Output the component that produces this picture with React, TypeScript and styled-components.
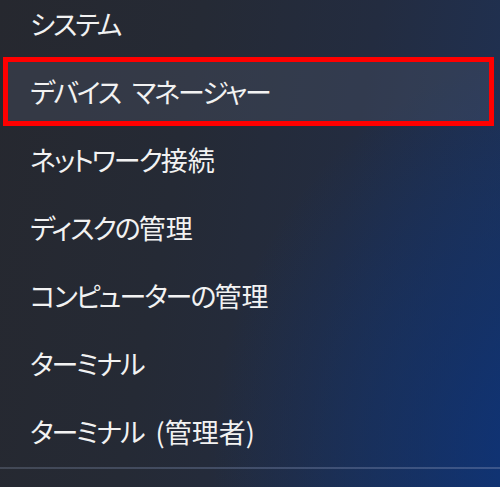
import React from "react";
import styled, { createGlobalStyle } from "styled-components";

const Global = createGlobalStyle`
  html, body {
    margin: 0;
    padding: 0;
    width: 500px;
    height: 487px;
    overflow: hidden;
  }
  body {
    font-family: "Noto Sans CJK JP", "Noto Sans", sans-serif;
  }
`;

const Screen = styled.div`
  width: 500px;
  height: 487px;
  overflow: hidden;
  display: flex;
  flex-direction: column;
  background:
    radial-gradient(ellipse 380px 420px at 118% 95%, rgba(10, 52, 128, 0.95) 0%, rgba(14, 50, 115, 0.6) 45%, rgba(20, 45, 95, 0) 100%),
    linear-gradient(100deg, #26282f 0%, #252a35 35%, #232c40 65%, #1e3258 100%);
`;

const Menu = styled.ul`
  list-style: none;
  margin: -11px 0 0 0;
  padding: 0;
  display: flex;
  flex-direction: column;
`;

const Item = styled.li<{ $active?: boolean }>`
  box-sizing: border-box;
  display: flex;
  align-items: center;
  white-space: pre;
  height: ${(p) => (p.$active ? "69px" : "68px")};
  margin: ${(p) => (p.$active ? "0 6px -1px 3px" : "0")};
  padding-left: ${(p) => (p.$active ? "22px" : "30px")};
  border: ${(p) => (p.$active ? "5px solid #ff0000" : "none")};
  background: ${(p) => (p.$active ? "rgba(80, 88, 108, 0.35)" : "transparent")};
  color: #f2f2f2;
  font-size: 27px;
  font-feature-settings: "palt" 1;
  line-height: 1;
`;

const Kana = styled.span`
  letter-spacing: -2px;
`;

const Kanji = styled.span`
  letter-spacing: 0;
`;

const Space = styled.span`
  display: inline-block;
  width: 12px;
`;

const Separator = styled.div`
  height: 2px;
  margin-top: 2px;
  background: linear-gradient(90deg, rgba(90, 98, 115, 0.55), rgba(95, 115, 160, 0.55));
`;

const items = [
  "システム",
  "デバイス マネージャー",
  "ネットワーク接続",
  "ディスクの管理",
  "コンピューターの管理",
  "ターミナル",
  "ターミナル (管理者)",
];

function renderRuns(text: string) {
  const runs = text.match(/[\u3040-\u30ff]+|\s+|[^\u3040-\u30ff\s]+/g) || [];
  return runs.map((r, i) => {
    if (/^\s+$/.test(r)) return <Space key={i} />;
    if (/[\u3040-\u30ff]/.test(r)) return <Kana key={i}>{r}</Kana>;
    return <Kanji key={i}>{r}</Kanji>;
  });
}

export default function App() {
  return (
    <Screen>
      <Global />
      <Menu>
        {items.map((t, i) => (
          <Item key={t} $active={i === 1}>
            {renderRuns(t)}
          </Item>
        ))}
      </Menu>
      <Separator />
    </Screen>
  );
}
